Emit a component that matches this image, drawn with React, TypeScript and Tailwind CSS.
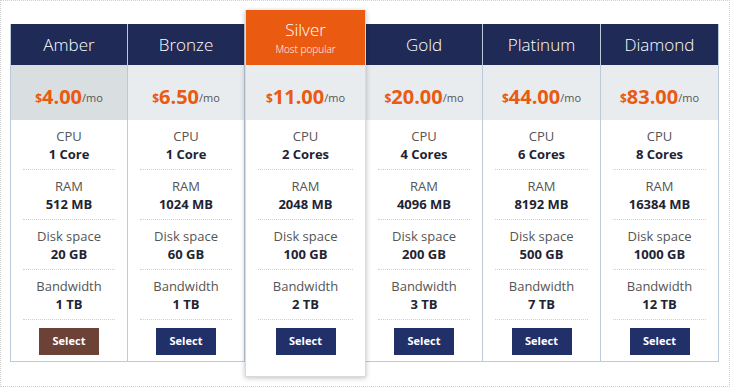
import React from 'react';

type Plan = {
  name: string;
  price: string;
  cpu: string;
  ram: string;
  disk: string;
  bw: string;
  width: string;
  popular?: boolean;
  hover?: boolean;
};

const plans: Plan[] = [
  { name: 'Amber', price: '4.00', cpu: '1 Core', ram: '512 MB', disk: '20 GB', bw: '1 TB', width: 'w-[118px]', hover: true },
  { name: 'Bronze', price: '6.50', cpu: '1 Core', ram: '1024 MB', disk: '60 GB', bw: '1 TB', width: 'w-[117px]' },
  { name: 'Silver', price: '11.00', cpu: '2 Cores', ram: '2048 MB', disk: '100 GB', bw: '2 TB', width: 'w-[121px]', popular: true },
  { name: 'Gold', price: '20.00', cpu: '4 Cores', ram: '4096 MB', disk: '200 GB', bw: '3 TB', width: 'w-[117px]' },
  { name: 'Platinum', price: '44.00', cpu: '6 Cores', ram: '8192 MB', disk: '500 GB', bw: '7 TB', width: 'w-[118px]' },
  { name: 'Diamond', price: '83.00', cpu: '8 Cores', ram: '16384 MB', disk: '1000 GB', bw: '12 TB', width: 'w-[118px]' },
];

function Spec({ label, value }: { label: string; value: string }) {
  return (
    <div className="h-[50px] mx-3 pt-[7px] border-b border-dotted border-[#c9d2da] text-center">
      <div className="text-[13px] leading-[18px] text-[#555]">{label}</div>
      <div className="text-[13px] leading-[18px] font-bold text-[#1f2433]">{value}</div>
    </div>
  );
}

function Column({ plan, first }: { plan: Plan; first: boolean }) {
  const box = plan.popular
    ? 'relative z-10 border-x border-b border-[#d6dbe0] shadow-[0_1px_5px_rgba(0,0,0,0.25)] bg-white'
    : `mt-[14px] bg-white border-b border-r border-[#bccbd9] ${first ? 'border-l' : ''}`;
  return (
    <div className={`${plan.width} shrink-0 ${box}`}>
      {plan.popular ? (
        <div className="h-[55px] bg-[#ea5a10] flex flex-col items-center pt-[8px] text-white">
          <div className="text-[17px] leading-[24px] font-light">{plan.name}</div>
          <div className="text-[10px] leading-[14px] font-light">Most popular</div>
        </div>
      ) : (
        <div className="h-[41px] bg-[#1f2a56] flex items-center justify-center text-white text-[17px] font-light">
          {plan.name}
        </div>
      )}
      <div
        className={`h-[55px] flex items-center justify-center pt-[8px] ${
          plan.hover ? 'bg-[#d9dee1]' : 'bg-[#e8ecee]'
        }`}
      >
        <span className="text-[12px] font-bold text-[#ea5a10] mt-[4px]">$</span>
        <span className="text-[20px] font-bold text-[#ea5a10] leading-none">{plan.price}</span>
        <span className="text-[11px] text-[#555] mt-[4px]">/mo</span>
      </div>
      <Spec label="CPU" value={plan.cpu} />
      <Spec label="RAM" value={plan.ram} />
      <Spec label="Disk space" value={plan.disk} />
      <Spec label="Bandwidth" value={plan.bw} />
      <div className={`flex justify-center pt-[8px] ${plan.popular ? 'h-[56px]' : 'h-[41px]'}`}>
        <button
          className={`w-[60px] h-[27px] text-white text-[11px] font-bold ${
            plan.hover ? 'bg-[#6c4136]' : 'bg-[#22306a]'
          }`}
        >
          Select
        </button>
      </div>
    </div>
  );
}

export default function App() {
  return (
    <div
      className="w-[730px] h-[387px] bg-white border border-dotted border-[#cfcfcf] overflow-hidden"
      style={{ fontFamily: '"Open Sans", "Noto Sans", sans-serif' }}
    >
      <div className="flex items-start pl-[9px] pt-[9px]">
        {plans.map((p, i) => (
          <Column key={p.name} plan={p} first={i === 0} />
        ))}
      </div>
    </div>
  );
}
